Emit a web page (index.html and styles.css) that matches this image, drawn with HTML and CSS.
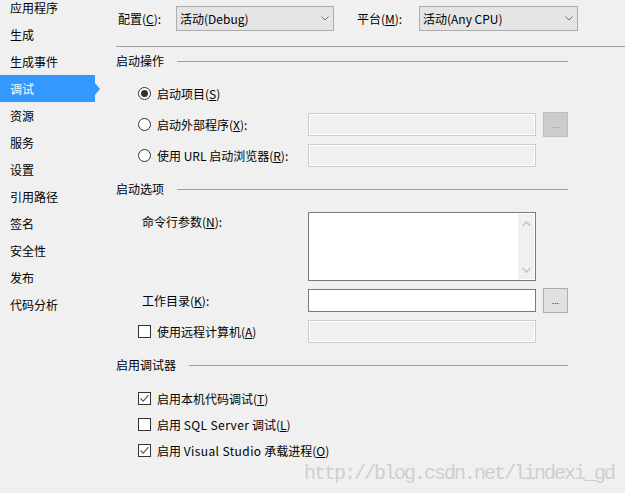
FILE: index.html
```html
<!DOCTYPE html>
<html lang="zh-CN">
<head>
<meta charset="utf-8">
<link rel="stylesheet" href="styles.css">
</head>
<body>
<div class="page">
  <nav class="sidebar">
    <div class="nav-item">应用程序</div>
    <div class="nav-item">生成</div>
    <div class="nav-item">生成事件</div>
    <div class="nav-item active">调试</div>
    <div class="nav-item">资源</div>
    <div class="nav-item">服务</div>
    <div class="nav-item">设置</div>
    <div class="nav-item">引用路径</div>
    <div class="nav-item">签名</div>
    <div class="nav-item">安全性</div>
    <div class="nav-item">发布</div>
    <div class="nav-item">代码分析</div>
  </nav>
  <main class="main">
    <div class="top-row">
      <span class="top-label cfg-label">配置(<u>C</u>):</span>
      <div class="select cfg-select"><span>活动(Debug)</span><svg class="chev" width="8" height="5" viewBox="0 0 8 5"><path d="M0.5 0.5 L4 4 L7.5 0.5" fill="none" stroke="#707070" stroke-width="1"/></svg></div>
      <span class="top-label plat-label">平台(<u>M</u>):</span>
      <div class="select plat-select"><span>活动(Any CPU)</span><svg class="chev" width="8" height="5" viewBox="0 0 8 5"><path d="M0.5 0.5 L4 4 L7.5 0.5" fill="none" stroke="#707070" stroke-width="1"/></svg></div>
    </div>
    <div class="top-rule"></div>

    <div class="group-head first"><span>启动操作</span><i class="rule"></i></div>
    <div class="rows launch">
      <div class="row">
        <div class="lead"><span class="radio checked"></span><span>启动项目(<u>S</u>)</span></div>
      </div>
      <div class="row">
        <div class="lead"><span class="radio"></span><span>启动外部程序(<u>X</u>):</span></div>
        <div class="field disabled"></div>
        <div class="browse disabled"><span>...</span></div>
      </div>
      <div class="row">
        <div class="lead"><span class="radio"></span><span>使用 URL 启动浏览器(<u>R</u>):</span></div>
        <div class="field disabled"></div>
      </div>
    </div>

    <div class="group-head"><span>启动选项</span><i class="rule"></i></div>
    <div class="rows options">
      <div class="row tall">
        <div class="lead plain"><span>命令行参数(<u>N</u>):</span></div>
        <div class="textarea">
          <div class="ta-body"></div>
          <div class="scrollbar">
            <svg width="9" height="6" viewBox="0 0 9 6"><path d="M0.5 5 L4.5 1 L8.5 5" fill="none" stroke="#c2c2c2" stroke-width="1.5"/></svg>
            <svg width="9" height="6" viewBox="0 0 9 6"><path d="M0.5 1 L4.5 5 L8.5 1" fill="none" stroke="#c2c2c2" stroke-width="1.5"/></svg>
          </div>
        </div>
      </div>
      <div class="row">
        <div class="lead plain"><span>工作目录(<u>K</u>):</span></div>
        <div class="field"></div>
        <div class="browse"><span>...</span></div>
      </div>
      <div class="row">
        <div class="lead"><span class="check"></span><span>使用远程计算机(<u>A</u>)</span></div>
        <div class="field disabled"></div>
      </div>
    </div>

    <div class="group-head"><span>启用调试器</span><i class="rule"></i></div>
    <div class="rows debuggers">
      <div class="row short">
        <div class="lead"><span class="check checked"><svg width="11" height="11" viewBox="0 0 11 11"><path d="M1.5 5.5 L4.2 8.2 L9.5 2.2" fill="none" stroke="#555" stroke-width="1.1"/></svg></span><span>启用本机代码调试(<u>T</u>)</span></div>
      </div>
      <div class="row short">
        <div class="lead"><span class="check"></span><span>启用 <span class="lat">SQL Server</span> 调试(<u>L</u>)</span></div>
      </div>
      <div class="row short">
        <div class="lead wide"><span class="check checked"><svg width="11" height="11" viewBox="0 0 11 11"><path d="M1.5 5.5 L4.2 8.2 L9.5 2.2" fill="none" stroke="#555" stroke-width="1.1"/></svg></span><span>启用 <span class="lat">Visual Studio</span> 承载进程(<u>O</u>)</span></div>
      </div>
    </div>
  </main>
  <div class="watermark">http://blog.csdn.net/lindexi_gd</div>
</div>
</body>
</html>
```

FILE: styles.css
```css
* { box-sizing: border-box; }
html, body {
  margin: 0;
  padding: 0;
  background: #f0f0f0;
}
body {
  font-family: "Noto Sans CJK SC", "Noto Sans", sans-serif;
  font-size: 12px;
  color: #000;
}
u { text-decoration: underline; text-underline-offset: 1px; }
.lat { letter-spacing: 0.4px; }

.page {
  position: relative;
  width: 625px;
  height: 493px;
  overflow: hidden;
  display: flex;
}

/* sidebar */
.sidebar {
  width: 110px;
  flex: none;
  margin-top: -6px;
}
.nav-item {
  width: 95px;
  height: 27px;
  line-height: 27px;
  padding-left: 10px;
  white-space: nowrap;
  position: relative;
}
.nav-item.active {
  background: #3399ff;
  color: #fff;
}
.nav-item.active::after {
  content: "";
  position: absolute;
  right: -5px;
  top: 8px;
  border-left: 5px solid #3399ff;
  border-top: 6px solid transparent;
  border-bottom: 6px solid transparent;
}

/* main */
.main {
  flex: 1;
  padding-left: 6px;
}
.top-row {
  display: flex;
  align-items: center;
  padding-top: 6px;
  padding-left: 2px;
  height: 31px;
}
.top-label { white-space: nowrap; }
.cfg-label { width: 58px; }
.plat-label { width: 62px; margin-left: 23px; }
.select {
  height: 25px;
  background: #e5e5e5;
  border: 1px solid #acacac;
  display: flex;
  align-items: center;
  justify-content: space-between;
  padding-left: 3px;
  padding-right: 4px;
}
.cfg-select { width: 158px; }
.plat-select { width: 159px; }
.chev { display: block; }

.top-rule {
  margin-top: 15px;
  height: 1px;
  background: #a0a0a0;
}

.group-head {
  width: 452px;
  height: 16px;
  line-height: 16px;
  display: flex;
  align-items: center;
  margin-top: 14px;
}
.group-head.first { margin-top: 6px; }
.group-head .rule {
  flex: 1;
  height: 1px;
  background: #a0a0a0;
  margin-left: 13px;
}

.rows {
  display: flex;
  flex-direction: column;
  gap: 8px;
  padding-left: 22px;
}
.launch { margin-top: 13px; }
.options { margin-top: 15px; }
.debuggers { margin-top: 16px; }

.row {
  display: flex;
  align-items: center;
  height: 23px;
}
.row.tall {
  height: 69px;
  align-items: flex-start;
}
.row.tall .lead { padding-top: 1px; }
.row.short { height: 18px; }

.lead {
  width: 170px;
  flex: none;
  display: flex;
  align-items: center;
  gap: 6px;
  white-space: nowrap;
}
.lead.plain { padding-left: 4px; }
.lead.wide { width: auto; }

.radio {
  width: 13px;
  height: 13px;
  border: 1px solid #333;
  border-radius: 50%;
  background: #fff;
  flex: none;
  display: flex;
  align-items: center;
  justify-content: center;
}
.radio.checked::after {
  content: "";
  width: 7px;
  height: 7px;
  border-radius: 50%;
  background: #333;
}
.check {
  width: 13px;
  height: 13px;
  border: 1px solid #333;
  background: #fff;
  flex: none;
  display: flex;
  align-items: center;
  justify-content: center;
}
.check svg { display: block; }

.field {
  width: 228px;
  height: 23px;
  background: #fff;
  border: 1px solid #7a7a7a;
  flex: none;
}
.field.disabled {
  background: #f0f0f0;
  border-color: #cccccc;
  box-shadow: inset 0 0 0 1px #fff;
}
.browse {
  width: 25px;
  height: 25px;
  margin-left: 7px;
  background: #e1e1e1;
  border: 1px solid #adadad;
  font-family: "Liberation Sans", sans-serif;
  font-size: 9px;
  line-height: 9px;
  display: flex;
  justify-content: center;
  align-items: flex-start;
  padding-top: 8px;
  color: #000;
}
.browse.disabled {
  background: #cccccc;
  border-color: #bfbfbf;
  color: #8a8a8a;
}

.textarea {
  width: 228px;
  height: 69px;
  background: #fff;
  border: 1px solid #7a7a7a;
  display: flex;
  padding: 1px;
}
.ta-body { flex: 1; }
.scrollbar {
  width: 16px;
  background: #f0f0f0;
  display: flex;
  flex-direction: column;
  justify-content: space-between;
  align-items: center;
  padding: 7px 0 6px;
}
.scrollbar svg { display: block; }

.watermark {
  position: absolute;
  left: 304px;
  top: 464px;
  font-family: "Liberation Mono", monospace;
  font-size: 20px;
  line-height: 20px;
  letter-spacing: -2px;
  color: #cfcfcf;
  white-space: nowrap;
}
```
